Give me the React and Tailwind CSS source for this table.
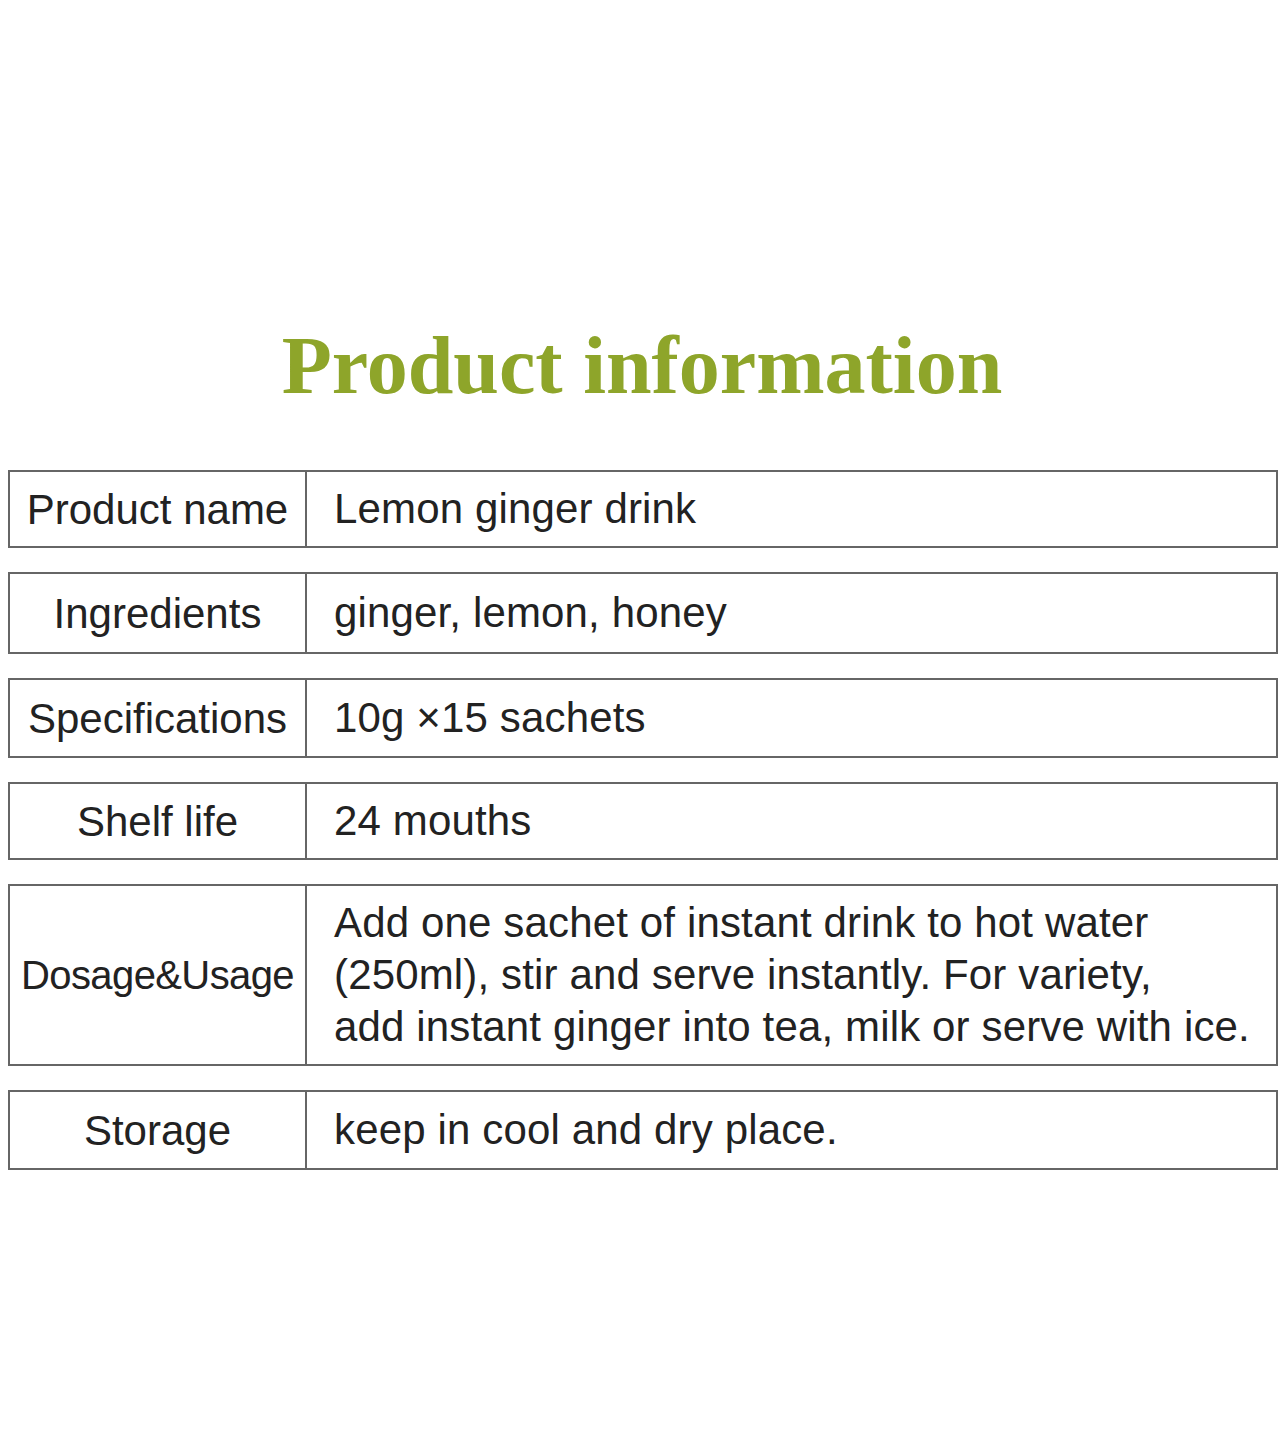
import React from "react";

const rows = [
  { label: "Product name", value: ["Lemon ginger drink"], h: "h-[78px]" },
  { label: "Ingredients", value: ["ginger, lemon, honey"], h: "h-[82px]" },
  { label: "Specifications", value: ["10g ×15 sachets"], h: "h-[80px]" },
  { label: "Shelf life", value: ["24 mouths"], h: "h-[78px]" },
  {
    label: "Dosage&Usage",
    labelClass: "text-[40px] tracking-[-0.6px]",
    value: [
      "Add one sachet of instant drink to hot water",
      "(250ml), stir and serve instantly. For variety,",
      "add instant ginger into tea, milk or serve with ice.",
    ],
    h: "h-[182px]",
  },
  { label: "Storage", value: ["keep in cool and dry place."], h: "h-[80px]" },
];

const App = () => {
  return (
    <div className="min-h-[1436px] w-full bg-white pt-[325px] font-['Liberation_Sans',Arial,sans-serif] text-[#222]">
      <h1 className="text-center font-['Liberation_Serif','Times_New_Roman',serif] text-[82px] font-bold leading-[82px] text-[#8ea52a]">
        Product information
      </h1>
      <div className="mt-[63px] flex flex-col gap-[24px] pl-[8px] pr-[6px]">
        {rows.map((row) => (
          <div
            key={row.label}
            className={`flex ${row.h} border-2 border-[#666]`}
          >
            <div
              className={`flex w-[297px] shrink-0 items-center justify-center whitespace-nowrap border-r-2 border-[#666] ${
                row.labelClass || "text-[42px]"
              }`}
            >
              {row.label}
            </div>
            <div className="flex flex-1 flex-col justify-center pl-[27px] text-[42px] leading-[52px] tracking-[0.15px]">
              {row.value.map((line) => (
                <span key={line} className="whitespace-nowrap">
                  {line}
                </span>
              ))}
            </div>
          </div>
        ))}
      </div>
    </div>
  );
};

export default App;
